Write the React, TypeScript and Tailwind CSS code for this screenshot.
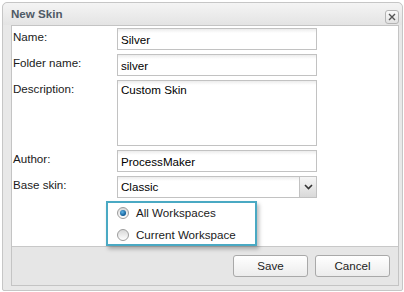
import React from "react";

const fieldCls =
  "h-[22px] w-[200px] border border-[#c2c2c2] bg-[linear-gradient(#ececec,#ffffff_4px)] pl-[3px] text-[11.6px] leading-[20px] text-black outline-none";

function Label({ children }: { children: React.ReactNode }) {
  return <div className="pl-[1px] pt-[2px] text-[11.6px] leading-[14px] text-[#1a1a1a]">{children}</div>;
}

function Radio({ checked }: { checked?: boolean }) {
  return (
    <span className="flex h-[12px] w-[12px] items-center justify-center rounded-full border border-[#9c9c9c] bg-[linear-gradient(#d8d8d8,#ffffff)]">
      {checked && (
        <span className="h-[6px] w-[6px] rounded-full bg-[radial-gradient(circle_at_40%_35%,#5fb3e6,#0d5a94_70%)]" />
      )}
    </span>
  );
}

function Button({ label }: { label: string }) {
  return (
    <button className="h-[22px] w-[75px] rounded-[3px] border border-[#a9a9a9] bg-[linear-gradient(#ffffff,#ececec)] text-[11.6px] text-[#222]">
      {label}
    </button>
  );
}

export default function App() {
  return (
    <div className="h-[292px] w-[404px] bg-white pl-[2px] pt-[2px] font-['Liberation_Sans',Arial,sans-serif]">
      <div className="flex h-[289px] w-[401px] flex-col rounded-t-[5px] rounded-b-[2px] border border-[#c6c6c6] bg-[#e8e8e8]">
        {/* title bar */}
        <div className="flex h-[22px] items-center justify-between rounded-t-[5px] bg-[linear-gradient(#f4f4f4,#e4e4e4)] pl-[8px] pr-[3px]">
          <span className="text-[11.6px] font-bold text-[#4f5a66]">New Skin</span>
          <span className="mt-[5px] flex h-[14px] w-[14px] items-center justify-center rounded-[3px] border border-[#b4b4b4] bg-[linear-gradient(#fafafa,#e2e2e2)]">
            <svg width="8" height="8" viewBox="0 0 8 8">
              <path d="M1 1L7 7M7 1L1 7" stroke="#555" strokeWidth="1.4" />
            </svg>
          </span>
        </div>

        {/* body */}
        <div className="ml-[8px] flex h-[261px] w-[388px] flex-col border border-[#c4c4c4]">
          <div className="flex h-[220px] flex-col bg-white pt-[2px]">
            <div className="grid grid-cols-[105px_200px] gap-y-[4px]">
              <Label>Name:</Label>
              <input className={fieldCls} defaultValue="Silver" />
              <Label>Folder name:</Label>
              <input className={fieldCls} defaultValue="silver" />
              <Label>Description:</Label>
              <textarea
                className="h-[66px] w-[200px] resize-none border border-[#c2c2c2] bg-[linear-gradient(#ececec,#ffffff_4px)] px-[3px] pt-[2px] text-[11.6px] leading-[14px] text-black outline-none"
                defaultValue="Custom Skin"
              />
              <Label>Author:</Label>
              <input className={fieldCls} defaultValue="ProcessMaker" />
              <Label>Base skin:</Label>
              <div className="flex h-[22px] w-[200px] border border-[#c2c2c2] bg-[linear-gradient(#ececec,#ffffff_4px)]">
                <span className="flex-1 pl-[3px] text-[11.6px] leading-[20px] text-black">Classic</span>
                <span className="flex w-[17px] items-center justify-center border-l border-[#c2c2c2] bg-[linear-gradient(#f6f6f6,#d9d9d9)]">
                  <svg width="9" height="6" viewBox="0 0 9 6">
                    <path d="M1 1L4.5 4.5L8 1" fill="none" stroke="#333" strokeWidth="1.6" />
                  </svg>
                </span>
              </div>
            </div>

            <div className="relative z-10 ml-[94px] mt-[3px] flex h-[46px] w-[151px] flex-col justify-center gap-[10px] border-2 border-[#4aa9c3] bg-white pl-[9px] shadow-[2px_3px_4px_rgba(0,0,0,0.28)]">
              <label className="flex items-center gap-[7px] text-[11.6px] leading-[12px] text-[#1a1a1a]">
                <Radio checked />
                All Workspaces
              </label>
              <label className="flex items-center gap-[7px] text-[11.6px] leading-[12px] text-[#1a1a1a]">
                <Radio />
                Current Workspace
              </label>
            </div>
          </div>

          <div className="flex flex-1 justify-end gap-[7px] border-t border-[#c8c8c8] bg-[#e6e6e6] pr-[8px] pt-[8px]">
            <Button label="Save" />
            <Button label="Cancel" />
          </div>
        </div>
      </div>
    </div>
  );
}
